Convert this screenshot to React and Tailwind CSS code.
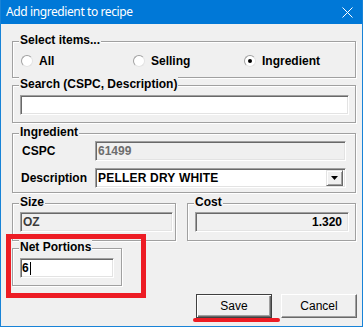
import React from "react";

const SUNKEN_WHITE =
  "border border-t-[#a0a0a0] border-l-[#a0a0a0] border-b-white border-r-white shadow-[inset_1px_1px_0_#696969,inset_-1px_-1px_0_#e3e3e3] bg-white";
const SUNKEN_GRAY =
  "border border-t-[#a0a0a0] border-l-[#a0a0a0] border-b-white border-r-white shadow-[inset_1px_1px_0_#696969,inset_-1px_-1px_0_#e3e3e3] bg-[#f0f0f0]";

function Group({ label, className, children }) {
  return (
    <div
      className={
        "relative border border-[#a0a0a0] shadow-[inset_1px_1px_0_#ffffff,1px_1px_0_#ffffff] " +
        className
      }
    >
      <span className="absolute -top-[9px] left-[6px] px-[1px] bg-[#f0f0f0] text-[12px] leading-[14px] font-bold text-black whitespace-nowrap">
        {label}
      </span>
      {children}
    </div>
  );
}

function Radio({ label, checked, className }) {
  return (
    <div className={"flex items-center h-[14px] " + className}>
      <span className="w-[12px] h-[12px] rounded-full bg-white border border-t-[#a0a0a0] border-l-[#a0a0a0] border-b-[#e3e3e3] border-r-[#e3e3e3] flex items-center justify-center">
        {checked && <span className="w-[4px] h-[4px] rounded-full bg-black" />}
      </span>
      <span className="ml-[6px] text-[12px] leading-[14px] font-bold text-black">
        {label}
      </span>
    </div>
  );
}

export default function App() {
  return (
    <div className="w-[364px] h-[328px] bg-white font-['Liberation_Sans',Arial,sans-serif]">
      <div className="relative w-[363px] h-[327px] bg-[#f0f0f0] border-x border-b border-[#1883d7] flex flex-col">
        {/* Title bar */}
        <div className="h-[24px] bg-[#0078d7] flex items-center justify-between pl-[5px] pr-[9px] shrink-0">
          <span className="text-white text-[12px] leading-[16px] tracking-[-0.4px] font-['Noto_Sans',sans-serif]">
            Add ingredient to recipe
          </span>
          <svg width="11" height="11" viewBox="0 0 11 11">
            <path d="M0.5 0.5 L10.5 10.5 M10.5 0.5 L0.5 10.5" stroke="#ffffff" strokeWidth="1" />
          </svg>
        </div>

        {/* Content */}
        <div className="flex flex-col pl-[11px] pr-[6px]">
          <Group label="Select items..." className="mt-[17px] h-[37px]">
            <div className="flex items-center pt-[12px] pl-[8px]">
              <Radio label="All" className="w-[112px]" />
              <Radio label="Selling" className="w-[111px]" />
              <Radio label="Ingredient" checked />
            </div>
          </Group>

          <Group label="Search (CSPC, Description)" className="mt-[7px] h-[38px]">
            <div className="pt-[9px] pl-[7px] pr-[6px]">
              <div className={SUNKEN_WHITE + " h-[20px] w-full"} />
            </div>
          </Group>

          <Group label="Ingredient" className="mt-[10px] h-[60px]">
            <div className="flex flex-col gap-[7px] pt-[7px] pl-[8px]">
              <div className="flex items-center">
                <span className="w-[74px] pl-[1px] text-[12px] leading-[14px] font-bold text-black">CSPC</span>
                <div className={SUNKEN_GRAY + " w-[251px] h-[20px] flex items-center pl-[2px]"}>
                  <span className="text-[12px] leading-[14px] font-bold text-[#6d6d6d]">61499</span>
                </div>
              </div>
              <div className="flex items-center">
                <span className="w-[74px] text-[12px] leading-[14px] font-bold text-black">Description</span>
                <div className={SUNKEN_WHITE + " w-[251px] h-[20px] flex items-center justify-between pl-[2px] pr-[2px]"}>
                  <span className="text-[12px] leading-[14px] font-bold text-black tracking-[0.2px]">PELLER DRY WHITE</span>
                  <div className="w-[17px] h-[16px] bg-[#f0f0f0] border border-t-[#e3e3e3] border-l-[#e3e3e3] border-b-[#696969] border-r-[#696969] shadow-[inset_1px_1px_0_#ffffff,inset_-1px_-1px_0_#a0a0a0] flex items-center justify-center">
                    <svg width="7" height="4" viewBox="0 0 7 4">
                      <path d="M0 0 H7 L3.5 4 Z" fill="#000000" />
                    </svg>
                  </div>
                </div>
              </div>
            </div>
          </Group>

          <div className="flex gap-[11px] mt-[10px]">
            <Group label="Size" className="w-[164px] h-[38px]">
              <div className="pt-[8px] pl-[7px]">
                <div className={SUNKEN_GRAY + " w-[153px] h-[20px] flex items-center pl-[2px]"}>
                  <span className="text-[12px] leading-[14px] font-bold text-[#3c3c3c]">OZ</span>
                </div>
              </div>
            </Group>
            <Group label="Cost" className="w-[169px] h-[38px]">
              <div className="pt-[8px] pl-[7px]">
                <div className={SUNKEN_GRAY + " w-[154px] h-[20px] flex items-center justify-end pr-[6px]"}>
                  <span className="text-[12px] leading-[14px] font-bold text-black">1.320</span>
                </div>
              </div>
            </Group>
          </div>

          <Group label="Net Portions" className="mt-[7px] w-[110px] h-[38px]">
            <div className="pt-[9px] pl-[7px]">
              <div className={SUNKEN_WHITE + " w-[94px] h-[20px] flex items-center pl-[1px]"}>
                <span className="text-[12px] leading-[14px] font-bold text-black">6</span>
                <span className="w-[1px] h-[13px] bg-black ml-[1px]" />
              </div>
            </div>
          </Group>

          <div className="flex justify-end gap-[9px] mt-[8px] -mr-[1px]">
            <button className="w-[76px] h-[24px] bg-[#f0f0f0] border border-[#404040] shadow-[inset_1px_1px_0_#ffffff,inset_-1px_-1px_0_#696969,inset_-2px_-2px_0_#a0a0a0] text-[12px] leading-[14px] text-black">
              Save
            </button>
            <button className="w-[76px] h-[24px] bg-[#f0f0f0] border border-t-white border-l-white border-b-[#696969] border-r-[#696969] shadow-[inset_-1px_-1px_0_#a0a0a0] text-[12px] leading-[14px] text-black">
              Cancel
            </button>
          </div>
        </div>

        {/* Annotation overlays */}
        <div className="absolute left-[5px] top-[234px] w-[140px] h-[64px] border-[5px] border-[#ed1c24]" />
        <div className="absolute left-[192px] top-[318px] w-[87px] h-[4px] rounded-full bg-[#ed1c24]" />
      </div>
    </div>
  );
}
